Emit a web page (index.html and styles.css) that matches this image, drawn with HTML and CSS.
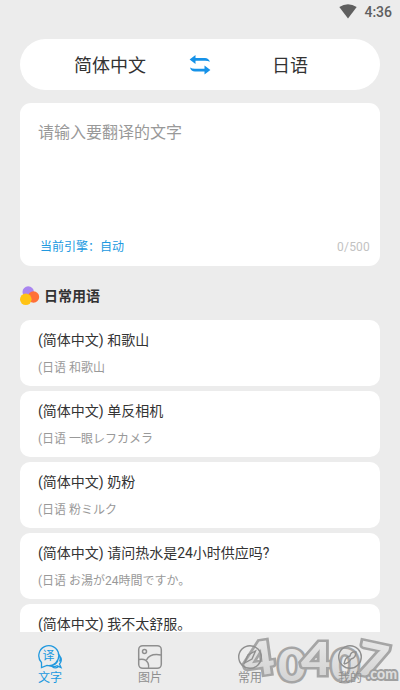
FILE: index.html
```html
<!DOCTYPE html>
<html lang="zh-CN">
<head>
<meta charset="utf-8">
<title>翻译</title>
<link rel="stylesheet" href="styles.css">
</head>
<body>
<div class="app">
  <header class="status">
    <svg class="wifi" width="18" height="15" viewBox="0 0 18 15"><path d="M.3 3Q9-2.6 17.7 3L9 14.5Z" fill="#5f5f5f"/></svg>
    <span>4:36</span>
  </header>
  <section class="langs">
    <span class="lang">简体中文</span>
    <svg width="22" height="22" viewBox="0 0 22 22" fill="#1692e8"><path d="M.6 5.500L6.500 1V4H16Q19.500 4 21 7.800Q19 6.800 16 6.800H6.500V10ZM21.400 16L15.500 11.500V14.700H6Q3 14.700 1 13.500Q2 17.600 6 17.600H15.500V20.500Z"/></svg>
    <span class="lang">日语</span>
  </section>
  <section class="editor">
    <div class="placeholder">请输入要翻译的文字</div>
    <div class="meta"><span class="engine">当前引擎：自动</span><span class="count">0/500</span></div>
  </section>
  <h2 class="heading">
    <svg width="20" height="20" viewBox="0 0 20 20"><circle cx="8.200" cy="6" r="5.700" fill="#a985f0"/><circle cx="13.500" cy="11" r="5.700" fill="#ff7038"/><circle cx="5.800" cy="13.300" r="5.800" fill="#ffc314"/></svg>
    <span>日常用语</span>
  </h2>
  <main class="list">
    <article class="card"><p class="src">(简体中文) 和歌山</p><p class="dst">(日语 和歌山</p></article>
    <article class="card"><p class="src">(简体中文) 单反相机</p><p class="dst">(日语 一眼レフカメラ</p></article>
    <article class="card"><p class="src">(简体中文) 奶粉</p><p class="dst">(日语 粉ミルク</p></article>
    <article class="card"><p class="src">(简体中文) 请问热水是24小时供应吗?</p><p class="dst">(日语 お湯が24時間ですか。</p></article>
    <article class="card"><p class="src">(简体中文) 我不太舒服。</p></article>
  </main>
  <svg class="watermark" width="170" height="60" viewBox="0 0 170 60">
    <defs><linearGradient id="silver" x1="0" y1="0" x2="0" y2="1"><stop offset="0" stop-color="#ececec"/><stop offset="1" stop-color="#cfcfcf"/></linearGradient></defs>
    <g class="digits">
      <text transform="translate(16 47) rotate(-8) scale(1.150 1)" font-size="46">4</text>
      <text transform="translate(48 51) scale(1.080 1)" font-size="44">0</text>
      <text transform="translate(71 45) scale(1.150 1)" font-size="46">4</text>
      <text transform="translate(101 51) scale(1.080 1)" font-size="44">0</text>
      <text transform="translate(124 43) rotate(12) scale(1.150 1)" font-size="46">7</text>
    </g>
    <text class="domain" x="137" y="49" textLength="30" lengthAdjust="spacingAndGlyphs">.com</text>
  </svg>
  <nav class="tabs">
    <div class="tab active">
      <svg width="26" height="26" viewBox="0 0 26 26" fill="none" stroke="currentColor" stroke-width="1.300"><path d="M4.500 18.500A10 10 0 1 1 10 21.500L4.500 23.500Z"/><path d="M21 9.500Q24.500 13 22.500 17.500M22.700 12Q26 16 22.500 20L24 23.500L20 21.800Q17 23.500 13 22Q19 21 21 16.500M15 22.800Q18.500 25 21 23"/><text class="glyph" x="5.500" y="15.500">译</text></svg>
      <span>文字</span>
    </div>
    <div class="tab">
      <svg width="26" height="26" viewBox="0 0 26 26" fill="none" stroke="currentColor" stroke-width="1.500"><rect x="1.700" y="1.700" width="22.600" height="22.600" rx="4"/><circle cx="7.500" cy="7.500" r="2"/><path d="M2 15.500Q8.500 14 11 19Q12 21.500 11.500 24M9.500 16Q13 9 24 11"/></svg>
      <span>图片</span>
    </div>
    <div class="tab">
      <svg width="26" height="26" viewBox="0 0 26 26" fill="none" stroke="currentColor" stroke-width="1.400"><circle cx="13" cy="13" r="11.300"/><path d="M18.500 7L15 15L7.500 19L11 11Z"/></svg>
      <span>常用</span>
    </div>
    <div class="tab">
      <svg width="26" height="26" viewBox="0 0 26 26" fill="none" stroke="currentColor" stroke-width="1.400"><circle cx="13" cy="13" r="11.300"/><path d="M7 20Q8 13 13 12Q14 7 19 8Q19 14 14 15Q12 19 7 20"/></svg>
      <span>我的</span>
    </div>
  </nav>
</div>
</body>
</html>
```

FILE: styles.css
```css
* { box-sizing: border-box; margin: 0; padding: 0; }
body { width: 400px; height: 690px; overflow: hidden; background: #ececec; color: #333; font-family: Roboto, "Noto Sans CJK SC", sans-serif; }
svg { display: block; flex: none; }
.app { position: relative; height: 690px; display: flex; flex-direction: column; overflow: hidden; }
.status { height: 39px; flex: none; display: flex; align-items: flex-start; justify-content: flex-end; gap: 7px; padding: 4px 8px 0; font-size: 14px; line-height: 17px; font-weight: 500; color: #5f5f5f; }
.langs { height: 51px; flex: none; margin: 0 20px; border-radius: 26px; background: #fff; display: flex; align-items: center; justify-content: center; font-size: 18px; line-height: 26px; }
.lang { flex: 1; text-align: center; padding-top: 3px; }
.lang:first-child { padding-left: 11px; }
.lang:last-child { padding-right: 11px; }
.editor { height: 163px; flex: none; margin: 13px 20px 0; padding: 17px 10px 10px 18px; border-radius: 11px; background: #fff; display: flex; flex-direction: column; justify-content: space-between; }
.placeholder { font-size: 16px; line-height: 26px; color: #999; }
.meta { display: flex; justify-content: space-between; padding-left: 2px; font-size: 12px; line-height: 18px; }
.engine { color: #2199df; }
.count { color: #c2c2c2; letter-spacing: .2px; }
.heading { height: 54px; flex: none; display: flex; align-items: center; gap: 4px; padding: 6px 20px 0; font-size: 14px; line-height: 20px; font-weight: 700; }
.list { flex: 1; min-height: 0; overflow: hidden; display: flex; flex-direction: column; gap: 5px; padding: 0 20px; }
.card { height: 66px; flex: none; padding: 10px 18px; border-radius: 10px; background: #fff; }
.src { font-size: 14px; line-height: 20px; }
.dst { margin-top: 9px; font-size: 12px; line-height: 18px; color: #999; }
.tabs { position: relative; height: 58px; flex: none; display: flex; padding-top: 12px; }
.tab { flex: 1; display: flex; flex-direction: column; align-items: center; font-size: 12px; line-height: 16px; color: #8f8f8f; }
.active { color: #2199df; }
.glyph { font-size: 12px; fill: currentColor; stroke: none; }
.watermark { position: absolute; left: 230px; top: 630px; overflow: visible; }
.digits text { font-family: Lato, sans-serif; font-weight: 900; fill: url(#silver); stroke: #a5a5a5; stroke-width: 5px; stroke-linejoin: miter; paint-order: stroke; }
.domain { font-family: Lato, sans-serif; font-size: 15px; font-weight: 900; fill: #ddd; stroke: #a0a0a0; stroke-width: 4px; paint-order: stroke; }
```
